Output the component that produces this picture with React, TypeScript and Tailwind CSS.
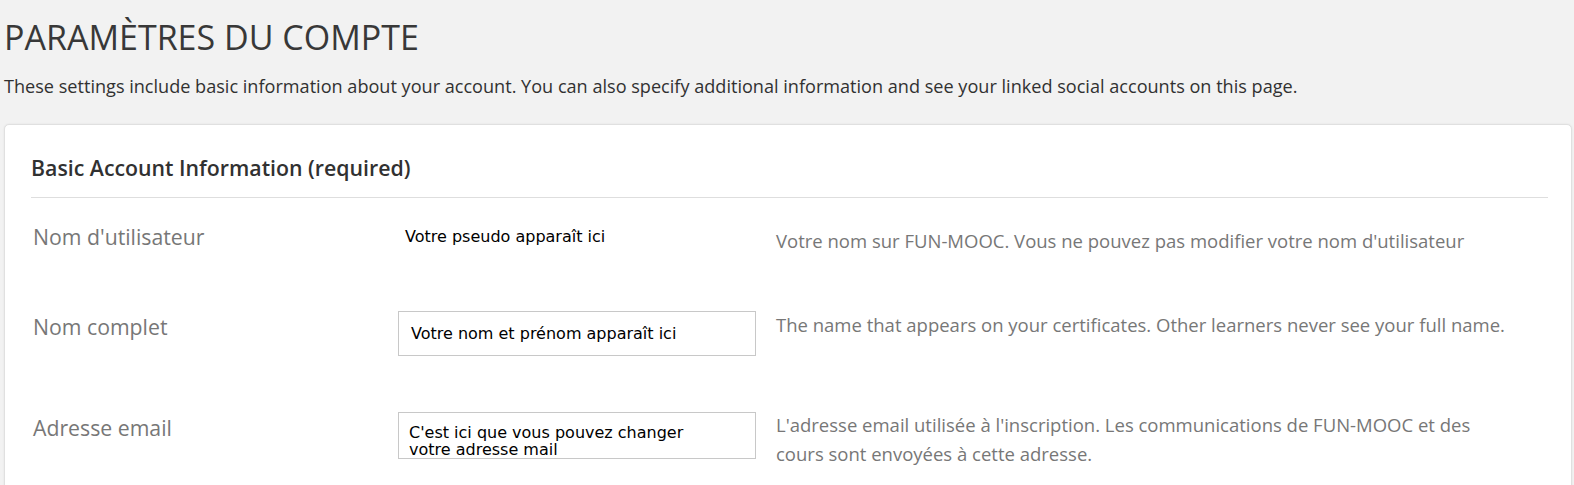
import React from "react";

export default function App() {
  const mono = { fontFamily: '"DejaVu Sans", sans-serif' };
  return (
    <div className="min-h-[485px] bg-[#f2f2f2] pl-[4px] pr-[2px] overflow-hidden" style={{ fontFamily: '"Open Sans", sans-serif' }}>
      <h1 className="pt-[16px] text-[34px] leading-[43px] text-[#383838] font-normal">
        PARAMÈTRES DU COMPTE
      </h1>
      <p className="mt-[15px] text-[18.1px] leading-[24px] text-[#313131]">
        These settings include basic information about your account. You can also specify additional information and see your linked social accounts on this page.
      </p>
      <div className="mt-[26px] bg-white border border-[#e0e0e0] rounded-[5px] shadow-[0_0_2px_rgba(0,0,0,0.08)] pl-[26px] pr-[23px] pb-[40px]">
        <div className="pt-[29px] pb-[15px] border-b border-[#dedede]">
          <h2 className="text-[21.3px] leading-[28px] font-semibold text-[#313131]">
            Basic Account Information (required)
          </h2>
        </div>

        {/* Row 1 */}
        <div className="flex items-start pt-[25px] h-[113px]">
          <div className="w-[367px] pl-[2px] text-[21.25px] leading-[28px] text-[#777777]">Nom d'utilisateur</div>
          <div className="w-[358px] pl-[7px] mt-[4px] text-[16px] leading-[20px] text-black" style={mono}>
            Votre pseudo apparaît ici
          </div>
          <div className="ml-[20px] w-[740px] mt-[3px] text-[18.5px] leading-[29px] text-[#777777]">
            Votre nom sur FUN-MOOC. Vous ne pouvez pas modifier votre nom d'utilisateur
          </div>
        </div>

        {/* Row 2 */}
        <div className="flex items-start h-[101px]">
          <div className="w-[367px] pl-[2px] mt-[2px] text-[21.25px] leading-[28px] text-[#777777]">Nom complet</div>
          <div className="w-[358px] h-[45px] border border-[#c8c8c8] flex items-center pl-[12px] text-[16px] text-black" style={mono}>
            Votre nom et prénom apparaît ici
          </div>
          <div className="ml-[20px] w-[740px] -mt-[1px] text-[18.5px] leading-[29px] text-[#777777]">
            The name that appears on your certificates. Other learners never see your full name.
          </div>
        </div>

        {/* Row 3 */}
        <div className="flex items-start">
          <div className="w-[367px] pl-[2px] mt-[2px] text-[21.25px] leading-[28px] text-[#777777]">Adresse email</div>
          <div className="w-[358px] h-[47px] border border-[#c8c8c8] overflow-hidden pl-[10px] pt-[11px] text-[16px] leading-[17px] text-black" style={mono}>
            C'est ici que vous pouvez changer
            <br />
            votre adresse mail
          </div>
          <div className="ml-[20px] w-[740px] -mt-[2px] text-[18.5px] leading-[29px] text-[#777777]">
            L'adresse email utilisée à l'inscription. Les communications de FUN-MOOC et des cours sont envoyées à cette adresse.
          </div>
        </div>
      </div>
    </div>
  );
}
